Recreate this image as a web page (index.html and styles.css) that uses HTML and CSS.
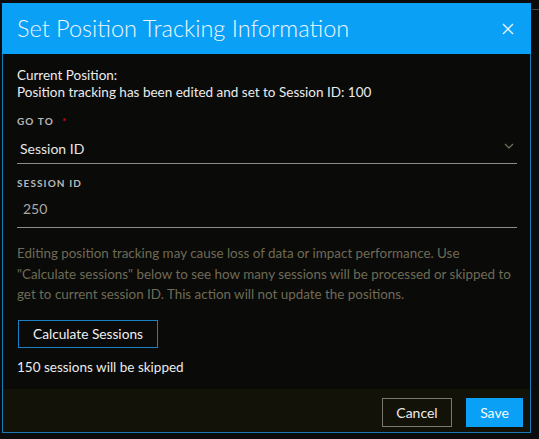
FILE: index.html
```html
<!DOCTYPE html>
<html lang="en">
<head>
<meta charset="utf-8">
<title>Set Position Tracking Information</title>
<link rel="stylesheet" href="styles.css">
</head>
<body>
<div class="modal">
  <div class="header">
    <h1 class="title">Set Position Tracking Information</h1>
    <span class="close" aria-label="Close">
      <svg width="12" height="12" viewBox="0 0 12 12"><path d="M1 1 L11 11 M11 1 L1 11" stroke="#e8f4fd" stroke-width="1.4" fill="none"/></svg>
    </span>
  </div>
  <div class="body">
    <p class="current">Current Position:<br>Position tracking has been edited and set to Session ID: 100</p>
    <div class="label label-goto">GO TO <span class="req">*</span></div>
    <div class="field select">
      <span>Session ID</span>
      <svg class="chev" width="10" height="6" viewBox="0 0 10 6"><path d="M1 1 L5 5 L9 1" stroke="#76735f" stroke-width="1.2" fill="none"/></svg>
    </div>
    <div class="label label-sid">SESSION ID</div>
    <div class="field input"><span>250</span></div>
    <p class="note">Editing position tracking may cause loss of data or impact performance. Use<br>"Calculate sessions" below to see how many sessions will be processed or skipped to<br>get to current session ID. This action will not update the positions.</p>
    <button class="btn-calc">Calculate Sessions</button>
    <p class="result">150 sessions will be skipped</p>
  </div>
  <div class="footer">
    <button class="btn btn-cancel">Cancel</button>
    <button class="btn btn-save">Save</button>
  </div>
</div>
</body>
</html>
```

FILE: styles.css
```css
* { box-sizing: border-box; }
html, body { margin: 0; padding: 0; }
body {
  background: #0b0b0b;
  font-family: Lato, "Open Sans", "Liberation Sans", sans-serif;
  width: 539px;
  height: 439px;
  overflow: hidden;
  position: relative;
  padding-top: 3px;
  padding-left: 2px;
}
body::after {
  content: "";
  position: absolute;
  left: 532px;
  top: 9px;
  width: 7px;
  height: 1px;
  background: #4a4a4a;
}
.modal {
  width: 529px;
  border: 1px solid #1a7ab8;
  border-top: none;
  background: #0a0a09;
}
.header {
  margin: 0 -1px;
  height: 51px;
  background: #0aa0f6;
  display: flex;
  align-items: center;
  justify-content: space-between;
  padding: 0 15px 0 15px;
}
.title {
  margin: 0;
  font-weight: 300;
  font-size: 23.5px;
  color: #eef7fe;
  letter-spacing: 0;
  line-height: 28px;
  padding-bottom: 2px;
}
.close { display: flex; width: 12px; height: 12px; margin-right: 2px; }
.body {
  padding: 13px 14px 13px 14px;
}
.current {
  margin: 0;
  font-size: 13.5px;
  line-height: 16.5px;
  color: #ececec;
}
.label {
  font-size: 10px;
  font-weight: 700;
  letter-spacing: 1.1px;
  line-height: 12px;
  color: #b8b8b8;
}
.label-goto { margin-top: 15px; }
.req { color: #d0021b; margin-left: 5px; font-size: 9px; }
.field {
  display: flex;
  align-items: center;
  justify-content: space-between;
  border-bottom: 1px solid #8c8c8c;
  font-size: 14px;
  line-height: 20px;
}
.select {
  margin-top: 9px;
  padding: 2px 4px 4px 3px;
  color: #e6e6e6;
  width: 500px;
}
.chev { margin-top: -6px; margin-right: -1px; }
.label-sid { margin-top: 13px; }
.input {
  margin-top: 8px;
  padding: 2px 4px 8px 6px;
  color: #a9a9a9;
  width: 500px;
}
.note {
  margin: 15px 0 0 0;
  font-size: 13.4px;
  line-height: 20.5px;
  color: #6e6b56;
  width: 510px;
  white-space: nowrap;
}
.btn-calc {
  margin-top: 15px;
  width: 140px;
  height: 28px;
  background: #0a0a09;
  border: 1.5px solid #1c80c4;
  color: #f0f0f0;
  font-family: Lato, "Open Sans", "Liberation Sans", sans-serif;
  font-size: 13.7px;
  padding: 0;
  display: flex;
  align-items: center;
  justify-content: center;
  margin-left: 1px;
}
.result {
  margin: 11px 0 0 0;
  font-size: 13.5px;
  line-height: 17px;
  color: #ececec;
}
.footer {
  background: #131209;
  height: 43px;
  display: flex;
  justify-content: flex-end;
  align-items: flex-start;
  padding: 9px 7px 0 0;
  gap: 14px;
}
.btn {
  height: 29px;
  font-family: Lato, "Open Sans", "Liberation Sans", sans-serif;
  font-size: 14px;
  padding: 0;
  display: flex;
  align-items: center;
  justify-content: center;
}
.btn-cancel {
  width: 70px;
  background: #131209;
  border: 1px solid #7a7a72;
  color: #ececec;
}
.btn-save {
  width: 57px;
  background: #0aa0f6;
  border: none;
  color: #f4faff;
}
```
